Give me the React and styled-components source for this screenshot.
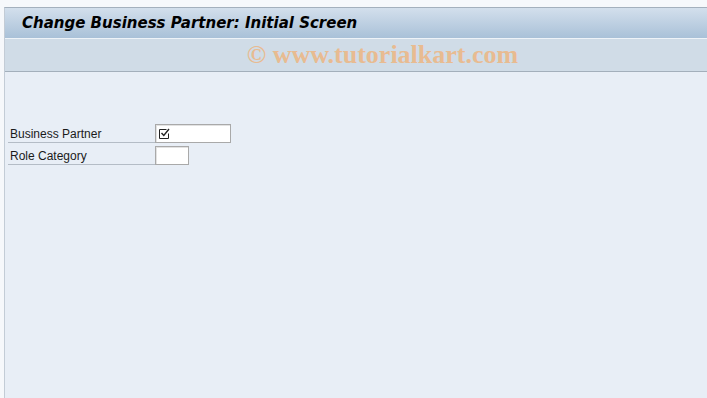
import React from "react";
import styled, { createGlobalStyle } from "styled-components";

const GlobalStyle = createGlobalStyle`
  html, body {
    margin: 0;
    padding: 0;
    background: #f6f8fb;
  }
`;

const Page = styled.div`
  height: 398px;
  padding: 7px 0 0 4px;
  box-sizing: border-box;
  display: flex;
`;

const Panel = styled.div`
  flex: 1;
  display: flex;
  flex-direction: column;
  background: #e8eef6;
  border-left: 1px solid #c3ccd6;
  border-top: 1px solid #a4b0bd;
`;

const TitleBar = styled.div`
  height: 30px;
  display: flex;
  align-items: center;
  padding-left: 17px;
  background: linear-gradient(#d3dfec, #a9c1d8);
  font-family: "DejaVu Sans", Verdana, sans-serif;
  font-weight: bold;
  font-style: italic;
  font-size: 15px;
  color: #000;
`;

const Toolbar = styled.div`
  height: 32px;
  display: flex;
  align-items: center;
  justify-content: center;
  background: #d0dce7;
  border-top: 1px solid #eef3f8;
  border-bottom: 1px solid #a3afbb;
`;

const Watermark = styled.span`
  font-family: "Liberation Serif", "Times New Roman", serif;
  font-weight: bold;
  font-size: 26px;
  color: #e8bb91;
  margin-left: 53px;
`;

const Form = styled.div`
  display: flex;
  flex-direction: column;
  gap: 3px;
  padding: 52px 0 0 3px;
`;

const Row = styled.div`
  display: flex;
  align-items: flex-end;
`;

const Label = styled.div`
  width: 147px;
  height: 19px;
  box-sizing: border-box;
  padding: 3px 0 0 2px;
  border-bottom: 1px solid #b4bcc6;
  font-family: "Liberation Sans", Arial, sans-serif;
  font-size: 12px;
  line-height: 15px;
  color: #1a1a1a;
`;

const Input = styled.div`
  width: ${(p) => p.$width}px;
  height: 19px;
  box-sizing: border-box;
  background: #fff;
  border: 1px solid #a9a9a9;
  box-shadow: inset 1px 1px 0 #e2e2e2;
  display: flex;
  align-items: center;
  padding-left: 2px;
`;

function CheckIcon() {
  return (
    <svg width="13" height="13" viewBox="0 0 13 13">
      <path d="M1.5 2.5 H8.5 M1.5 2.5 V11.5 H10.5 V6.5" stroke="#222" strokeWidth="1" fill="none" />
      <path d="M3.5 6 L5.8 8.5 L11 2" stroke="#222" strokeWidth="1.4" fill="none" />
    </svg>
  );
}

export default function App() {
  return (
    <>
      <GlobalStyle />
      <Page>
        <Panel>
          <TitleBar>Change Business Partner: Initial Screen</TitleBar>
          <Toolbar>
            <Watermark>© www.tutorialkart.com</Watermark>
          </Toolbar>
          <Form>
            <Row>
              <Label>Business Partner</Label>
              <Input $width={76}>
                <CheckIcon />
              </Input>
            </Row>
            <Row>
              <Label>Role Category</Label>
              <Input $width={34} />
            </Row>
          </Form>
        </Panel>
      </Page>
    </>
  );
}
